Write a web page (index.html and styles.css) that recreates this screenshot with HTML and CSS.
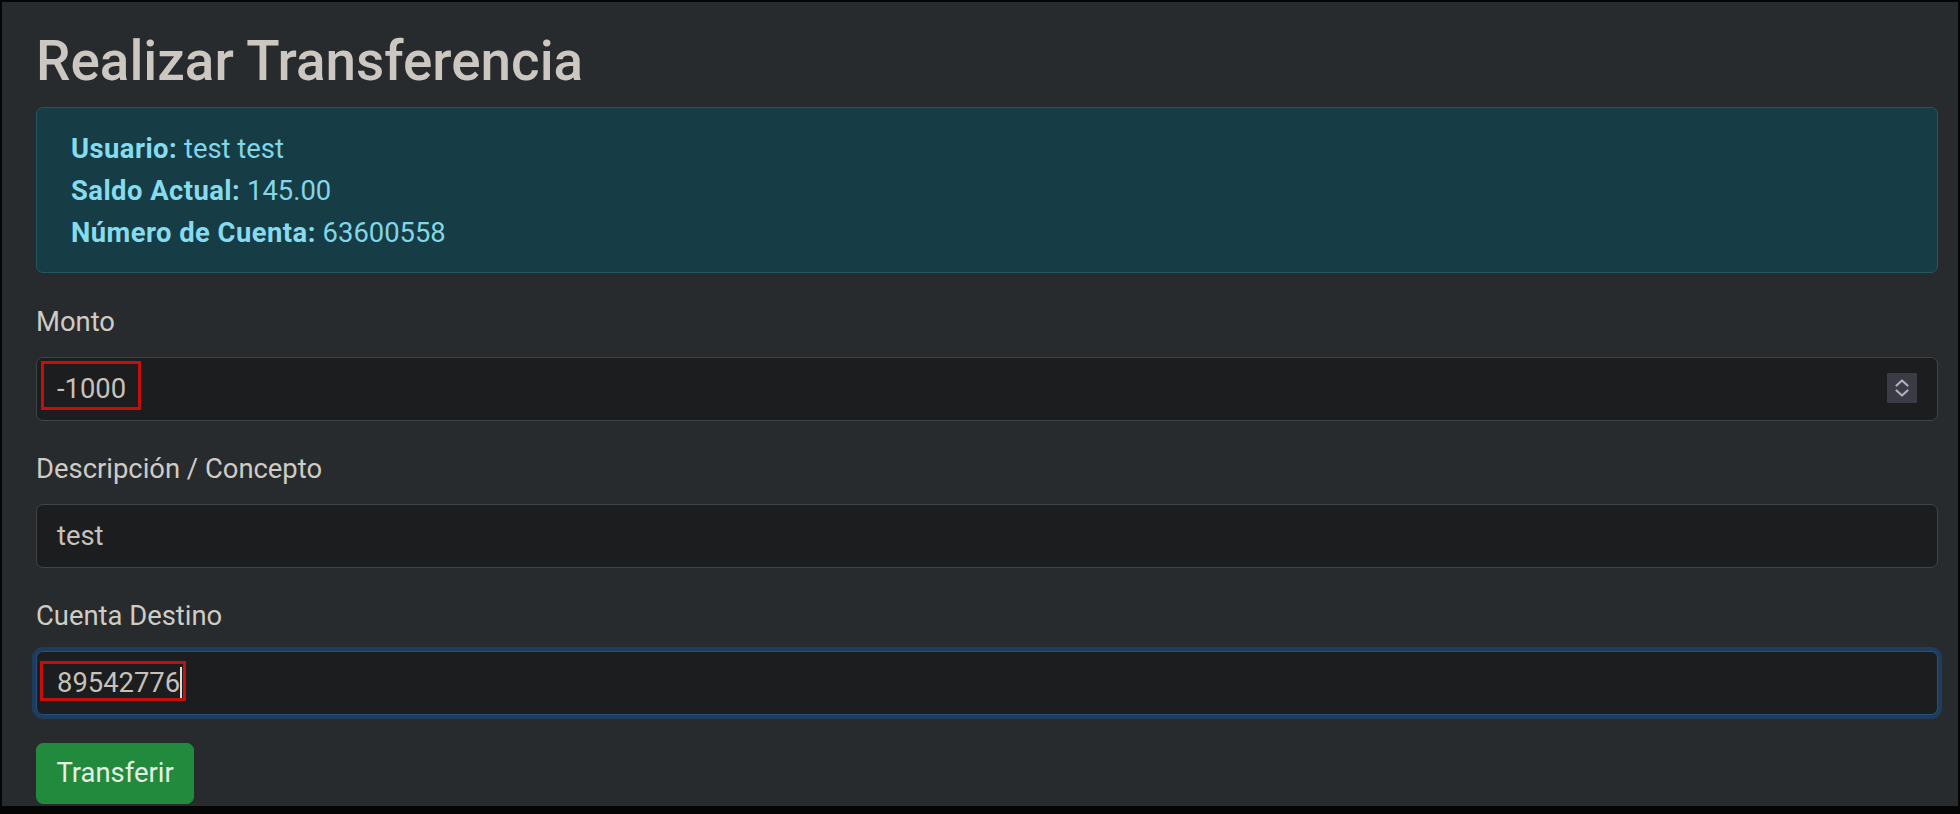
FILE: index.html
```html
<!DOCTYPE html>
<html lang="es">
<head>
<meta charset="utf-8">
<title>Realizar Transferencia</title>
<link rel="stylesheet" href="styles.css">
</head>
<body>
<div class="screen">
  <h2 class="title">Realizar Transferencia</h2>
  <div class="alert">
    <div><strong>Usuario:</strong> test test</div>
    <div><strong>Saldo Actual:</strong> 145.00</div>
    <div><strong>Número de Cuenta:</strong> 63600558</div>
  </div>
  <div class="group">
    <div class="label">Monto</div>
    <div class="field">
      <span class="value">-1000</span>
      <span class="mark mark-amount"></span>
      <span class="spinner">
        <svg width="30" height="30" viewBox="0 0 30 30"><path d="M9.5 12.5 L15 7.5 L20.5 12.5" fill="none" stroke="#aeb0bb" stroke-width="2.2" stroke-linecap="round" stroke-linejoin="round"/><path d="M9.5 17.5 L15 22.5 L20.5 17.5" fill="none" stroke="#aeb0bb" stroke-width="2.2" stroke-linecap="round" stroke-linejoin="round"/></svg>
      </span>
    </div>
  </div>
  <div class="group">
    <div class="label">Descripción / Concepto</div>
    <div class="field"><span class="value">test</span></div>
  </div>
  <div class="group">
    <div class="label">Cuenta Destino</div>
    <div class="field focused">
      <span class="value">89542776</span><span class="caret"></span>
      <span class="mark mark-account"></span>
    </div>
  </div>
  <button class="btn">Transferir</button>
</div>
</body>
</html>
```
FILE: styles.css
```css
html, body {
  margin: 0;
  padding: 0;
  background: #050505;
}
body {
  font-family: Roboto, "Liberation Sans", sans-serif;
  height: 814px;
  overflow: hidden;
}
.screen {
  margin: 2px 2px 0 2px;
  height: 804px;
  background: #282b2d;
  padding: 25.6px 20px 0 34px;
  box-sizing: border-box;
  overflow: hidden;
}
.title {
  margin: 0 0 13.7px 0;
  font-size: 54.8px;
  font-weight: 500;
  line-height: 66px;
  color: #ccc7c0;
}
.alert {
  background: #163c45;
  border: 1px solid #22595f;
  border-radius: 7px;
  padding: 20px 34px 18px;
  font-size: 27.4px;
  line-height: 42px;
  color: #82d6e6;
  margin-bottom: 28.5px;
}
.alert strong {
  font-weight: 700;
  letter-spacing: 0.45px;
  color: #86dcee;
}
.group {
  margin-bottom: 28.2px;
}
.label {
  font-size: 27.4px;
  line-height: 41.1px;
  color: #cfcbc5;
  margin-bottom: 13.8px;
}
.field {
  position: relative;
  display: flex;
  align-items: center;
  height: 64px;
  box-sizing: border-box;
  padding-left: 20px;
  background: #1b1d1f;
  border: 1px solid #404346;
  border-radius: 7px;
  font-size: 27.4px;
  color: #c6c1ba;
}
.field.focused {
  border-color: #28507c;
  box-shadow: 0 0 0 4px #1e3c5e;
}
.caret {
  display: inline-block;
  width: 2px;
  height: 31px;
  background: #dcdcdc;
}
.mark {
  position: absolute;
  border: 3px solid #c80d0d;
  box-sizing: border-box;
}
.mark-amount {
  left: 4px;
  top: 3.5px;
  width: 100px;
  height: 49px;
}
.mark-account {
  left: 3px;
  top: 9.5px;
  width: 146px;
  height: 40px;
}
.spinner {
  position: absolute;
  right: 20px;
  top: 15px;
  width: 30px;
  height: 30px;
  background: #3a3b44;
  display: flex;
}
.btn {
  display: block;
  font-family: Roboto, "Liberation Sans", sans-serif;
  font-size: 27.4px;
  line-height: 41.1px;
  padding: 9px 19.5px;
  border: 1px solid #228a3c;
  border-radius: 7px;
  background: #228a3c;
  color: #e4f0e4;
}
```
